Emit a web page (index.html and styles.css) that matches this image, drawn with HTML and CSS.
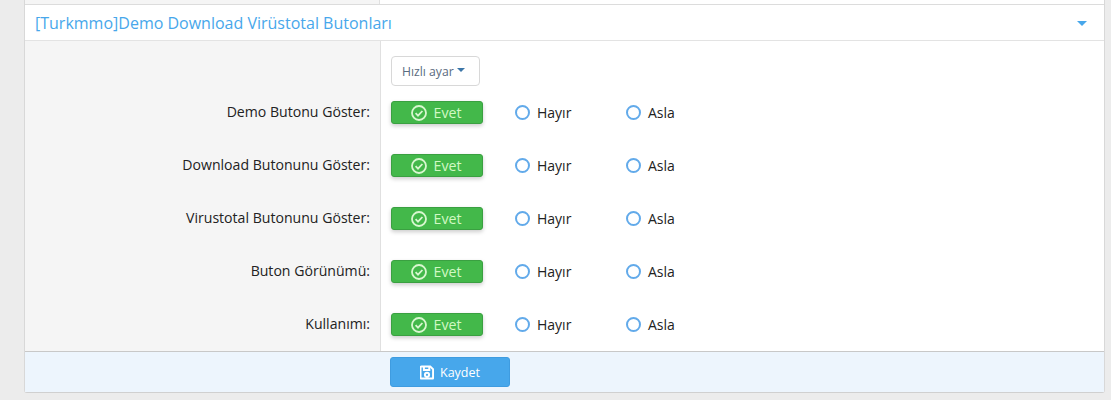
FILE: index.html
```html
<!DOCTYPE html>
<html lang="tr">
<head>
<meta charset="utf-8">
<title>Demo Download Virüstotal Butonları</title>
<link rel="stylesheet" href="styles.css">
</head>
<body>
<div class="panel">
  <div class="stub"><div class="stub-left"></div><div class="stub-right"></div></div>
  <h3 class="header"><span>[Turkmmo]Demo Download Virüstotal Butonları</span><i class="caret header-caret"></i></h3>
  <div class="form">
    <div class="row row-quick">
      <div class="label"></div>
      <div class="controls"><button class="quick">Hızlı ayar<i class="caret quick-caret"></i></button></div>
    </div>
    <div class="row">
      <div class="label">Demo Butonu Göster:</div>
      <div class="controls">
        <div class="yes"><svg class="check" viewBox="0 0 16 16"><circle cx="8" cy="8" r="7"/><path d="M4.6 8.200l2.400 2.400 4.400-4.600"/></svg>Evet</div>
        <div class="opt"><i class="radio"></i>Hayır</div>
        <div class="opt"><i class="radio"></i>Asla</div>
      </div>
    </div>
    <div class="row">
      <div class="label">Download Butonunu Göster:</div>
      <div class="controls">
        <div class="yes"><svg class="check" viewBox="0 0 16 16"><circle cx="8" cy="8" r="7"/><path d="M4.6 8.200l2.400 2.400 4.400-4.600"/></svg>Evet</div>
        <div class="opt"><i class="radio"></i>Hayır</div>
        <div class="opt"><i class="radio"></i>Asla</div>
      </div>
    </div>
    <div class="row">
      <div class="label">Virustotal Butonunu Göster:</div>
      <div class="controls">
        <div class="yes"><svg class="check" viewBox="0 0 16 16"><circle cx="8" cy="8" r="7"/><path d="M4.6 8.200l2.400 2.400 4.400-4.600"/></svg>Evet</div>
        <div class="opt"><i class="radio"></i>Hayır</div>
        <div class="opt"><i class="radio"></i>Asla</div>
      </div>
    </div>
    <div class="row">
      <div class="label">Buton Görünümü:</div>
      <div class="controls">
        <div class="yes"><svg class="check" viewBox="0 0 16 16"><circle cx="8" cy="8" r="7"/><path d="M4.6 8.200l2.400 2.400 4.400-4.600"/></svg>Evet</div>
        <div class="opt"><i class="radio"></i>Hayır</div>
        <div class="opt"><i class="radio"></i>Asla</div>
      </div>
    </div>
    <div class="row row-last">
      <div class="label">Kullanımı:</div>
      <div class="controls">
        <div class="yes"><svg class="check" viewBox="0 0 16 16"><circle cx="8" cy="8" r="7"/><path d="M4.6 8.200l2.400 2.400 4.400-4.600"/></svg>Evet</div>
        <div class="opt"><i class="radio"></i>Hayır</div>
        <div class="opt"><i class="radio"></i>Asla</div>
      </div>
    </div>
  </div>
  <div class="footer">
    <button class="save"><svg class="disk" viewBox="0 0 14 14"><path d="M1.500 0.900h8.700l2.900 2.900v8.300a1 1 0 0 1-1 1h-10.600a1 1 0 0 1-1-1v-10.200a1 1 0 0 1 1-1z"/><path d="M3.900 1v3.600h5.400v-3.600"/><circle cx="7" cy="9.300" r="2.100"/></svg>Kaydet</button>
  </div>
</div>
</body>
</html>
```
FILE: styles.css
```css
* { box-sizing: border-box; }
html, body { margin: 0; height: 400px; overflow: hidden; }
body {
  background: #ececec;
  padding: 0 6px 0 24px;
  font-family: "Open Sans", "Noto Sans", sans-serif;
  font-size: 14px;
  color: #222;
}
.panel {
  border-left: 1px solid #d8d8d8;
  border-right: 1px solid #d8d8d8;
  border-bottom: 1px solid #d0d0d0;
  border-radius: 0 0 3px 3px;
  background: #fff;
}
.stub { display: flex; height: 4px; }
.stub-left { width: 355px; background: #f5f5f5; border-right: 1px solid #e0e0e0; }
.stub-right { flex: 1; background: #fff; }
.header {
  margin: 0;
  height: 37px;
  display: flex;
  align-items: center;
  justify-content: space-between;
  padding: 0 17px 0 10px;
  font-size: 16px;
  font-weight: 400;
  color: #47a7eb;
  background: #fff;
  border-top: 1px solid #dcdcdc;
  border-bottom: 1px solid #e3e3e3;
}
.caret {
  display: inline-block;
  width: 0;
  height: 0;
  border-left: 5px solid transparent;
  border-right: 5px solid transparent;
  border-top: 5px solid #47a7eb;
}
.header-caret { margin-top: 2px; }
.form { background: #fff; }
.row { display: flex; height: 53px; }
.row-quick { height: 46px; }
.row-last { height: 52px; }
.label {
  width: 356px;
  flex: none;
  background: #f5f5f5;
  border-right: 1px solid #e0e0e0;
  padding: 15px 10px 0 0;
  font-size: 14.1px;
  text-align: right;
}
.row-quick .label { padding: 0; }
.controls { display: flex; align-items: flex-start; padding: 14px 0 0 10px; }
.row-quick .controls { padding-top: 15px; }
.quick {
  display: flex;
  align-items: center;
  height: 30px;
  width: 89px;
  padding: 0 0 0 10px;
  background: #fff;
  border: 1px solid #d8d8d8;
  border-radius: 4px;
  font: inherit;
  font-size: 12.2px;
  color: #5a6b80;
}
.quick-caret {
  margin-left: 3px;
  margin-top: -2px;
  border-left-width: 4px;
  border-right-width: 4px;
  border-top: 4px solid #3c76a8;
}
.yes {
  display: flex;
  align-items: center;
  justify-content: center;
  width: 92px;
  height: 23px;
  padding-right: 2px;
  background: #43b84a;
  border: 1px solid #3aa041;
  border-radius: 3px;
  box-shadow: 0 2px 4px rgba(0,0,0,.2);
  color: #d2f8c4;
  font-size: 14.2px;
}
.check { width: 16px; height: 16px; margin-right: 7px; fill: none; stroke: #d9f7d0; stroke-width: 1.8; }
.opt { display: flex; align-items: center; height: 23px; width: 111px; color: #222; }
.opt:nth-child(2) { margin-left: 32px; }
.radio {
  width: 15px;
  height: 15px;
  margin-right: 7px;
  border: 2px solid #62aaea;
  border-radius: 50%;
  background: #fff;
}
.footer {
  height: 41px;
  background: #edf5fd;
  border-top: 1px solid #c8c8c8;
  padding: 5px 0 0 365px;
}
.save {
  display: flex;
  align-items: center;
  justify-content: center;
  width: 120px;
  height: 30px;
  background: #47a7eb;
  border: 1px solid #3f9ce0;
  border-radius: 3px;
  font: inherit;
  font-size: 12.5px;
  color: #fff;
}
.disk { width: 14px; height: 15px; margin-right: 6px; fill: none; stroke: #fff; stroke-width: 2; }
```
